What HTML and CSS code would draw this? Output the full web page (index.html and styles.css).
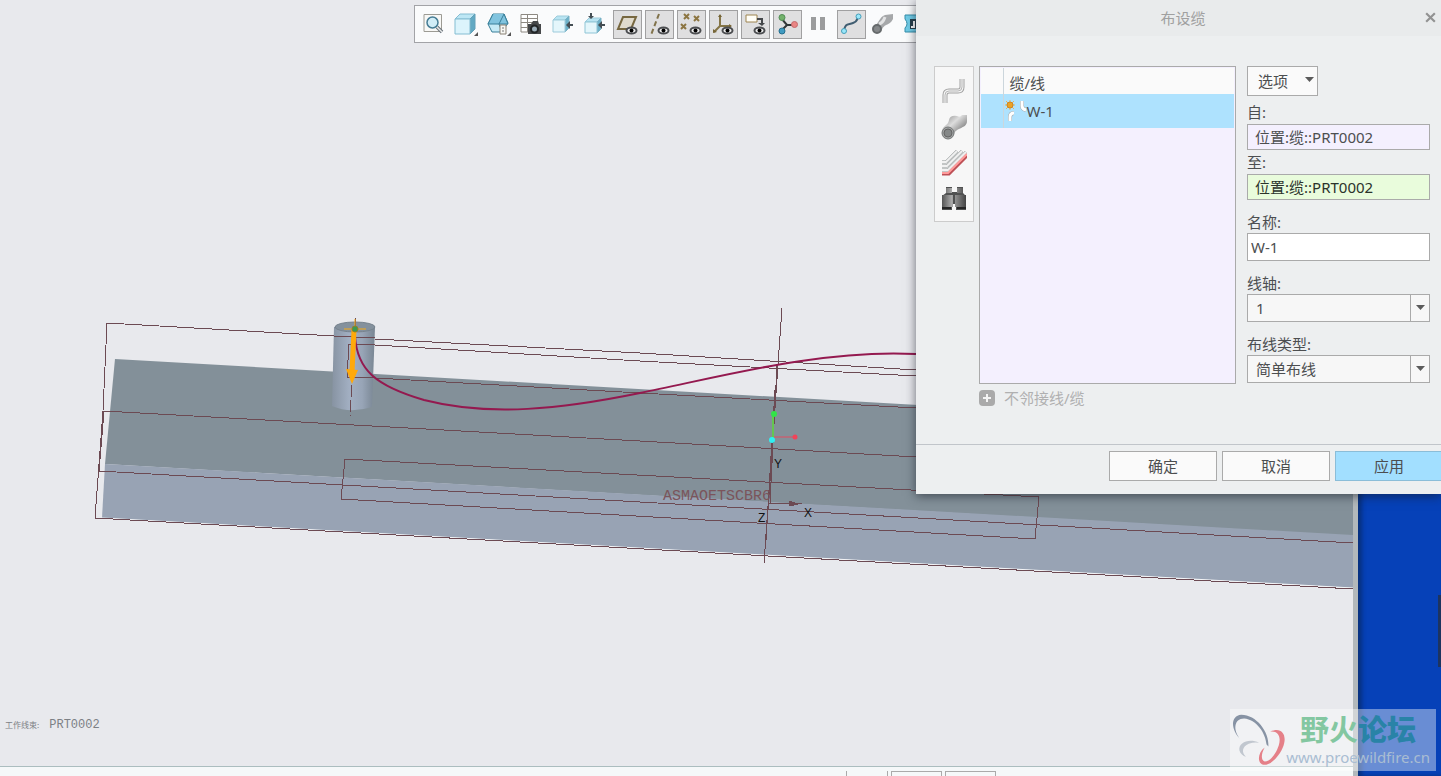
FILE: index.html
```html
<!DOCTYPE html>
<html lang="zh-CN">
	<head>
		<meta charset="UTF-8" />
		<meta name="viewport" content="width=device-width, initial-scale=1.0" />
		<title>布设缆</title>
		<link rel="stylesheet" href="styles.css">
	</head>
	<body>
		<div class="desktop">
			<main class="app">
				<div class="viewport">
					<svg class="scene" viewBox="0 0 1353 766" preserveAspectRatio="xMinYMin slice">
						<defs>
							<linearGradient id="cylinder">
								<stop offset="0" stop-color="#8793a2" />
								<stop offset="0.4" stop-color="#a2afc2" />
								<stop offset="0.7" stop-color="#98a5b7" />
								<stop offset="1" stop-color="#788592" />
							</linearGradient>
						</defs>
						<!-- plate -->
						<path d="M115 359L1353 430V536L105 464Z" fill="#839099" />
						<path d="M105 464L1353 535V588L102 518Z" fill="#98a3b4" />
						<path d="M102 518L1353 588" stroke="#f4f4f6" />
						<!-- cylinder -->
						<path d="M334 327L332 406Q350 414 372 407L375 327Z" fill="url(#cylinder)" />
						<ellipse cx="355" cy="327" rx="20" ry="5" fill="#84919d" stroke="#77838e" />
						<!-- datum planes -->
						<g class="datum">
							<path d="M107 323L334 336M375 339L640 353L916 370M107 323L103 411L95 518L1353 589" />
							<path d="M334 336L375 338M349 344L375 345L640 361L916 376M349 344L347 377L375 378L640 393L916 408" />
							<path d="M104 411L99 471M104 411L640 441L916 457M99 471L640 502L1353 543" />
							<path d="M345 459L1039 497L1035 539L341 499Z" />
							<path d="M782 308L764 563M779 350L768 510M777 365L770 503M775 390L766 540M768 503L802 504" />
							<path d="M356 318L355 330M352 385L350 416" stroke-dasharray="12 3" />
							<path d="M789 501L798 504L789 506Z" fill="#6c4a53" />
						</g>
						<!-- cable -->
						<path d="M355 336C357 370 376 386 424 400C490 417 562 409 640 393C720 377 821 349 916 354" fill="none" stroke="#94194f" stroke-width="2" />
						<!-- start direction arrow -->
						<path d="M355 319V338M344 329H366" stroke="#f7aa16" />
						<path d="M354 330L352 372" stroke="#ffa90a" stroke-width="5" />
						<path d="M346 369L358 370L352 384Z" fill="#ffa90a" />
						<circle cx="355" cy="329" r="3" fill="#3b9a50" stroke="#8f812a" />
						<!-- coordinate system -->
						<path d="M773 414V440" stroke="#65c650" stroke-width="2" />
						<path d="M774 437H795" stroke="#e34c61" />
						<circle cx="774" cy="414" r="3" fill="#32e448" />
						<circle cx="795" cy="437" r="2.5" fill="#f04459" />
						<circle cx="772" cy="440" r="3" fill="#2ff0f2" />
						<text class="axis" x="774" y="468">Y</text>
						<text class="axis" x="804" y="517">X</text>
						<text class="axis" x="758" y="522">Z</text>
						<text class="csys" x="663" y="500">ASMAOETSCBR6</text>
					</svg>
					<p class="work-part"><small>工作线束:</small> PRT0002</p>
				</div>
				<div class="statusbar"><i></i><i class="status-box"></i><i class="status-box"></i></div>
			</main>
			<aside class="wallpaper"><div class="wallpaper-item"></div></aside>

			<div class="toolbar">
				<button type="button" aria-label="重新调整">
					<svg viewBox="0 0 27 27"><path d="M2 3.500H19.500V20.500H2Z" fill="#f8f8f6" stroke="#9c9b94" /><circle cx="10.500" cy="11.500" r="5.500" fill="#d1edf7" stroke="#457c94" stroke-width="1.500" /><path d="M15 16L20 21" stroke="#69727a" stroke-width="3.500" /><path d="M15 16L20 21" stroke="#e5e7e7" stroke-width="1.500" /></svg>
				</button>
				<button type="button" aria-label="显示样式">
					<svg viewBox="0 0 27 27"><path d="M1 8L6 3H21L16 8Z" fill="#bde7f5" stroke="#86bdd2" /><path d="M16 8L21 3V18L16 23Z" fill="#62a9c3" stroke="#62a0b8" /><path d="M1 8H16V23H1Z" fill="#dcf4fc" stroke="#84bdd2" /><path d="M24 21V25H20Z" fill="#555" /></svg>
				</button>
				<button type="button" aria-label="已保存方向">
					<svg viewBox="0 0 27 27"><path d="M7 3H18L22 12L16 21H6L2 13Z" fill="#c5eaf6" stroke="#397f99" /><path d="M7 3L2 13H13L18 3M13 13L16 21M13 13H22L18 3" fill="#81c4df" stroke="#397f99" /><path d="M14 14H20V23H14Z" fill="#f8f8f4" stroke="#898174" /><path d="M16 17H18M16 20H18" stroke="#777" /><path d="M25 21V25H21Z" fill="#555" /></svg>
				</button>
				<button type="button" aria-label="视图管理器">
					<svg viewBox="0 0 27 27"><path d="M3 3.500H19.500V21H3ZM3 7.500H19.500M3 11.500H19.500M3 16.500H19M9.500 3V21" fill="#fff" stroke="#8d8982" /><path d="M10 13H13L15 10H20L21 13H23V23H10Z" fill="#46484a" /><circle cx="16.500" cy="18" r="3.500" fill="#9badb9" stroke="#222527" stroke-width="2" /></svg>
				</button>
				<button type="button" aria-label="前视图">
					<svg viewBox="0 0 27 27"><path d="M3 9L7 5H19L15 9Z" fill="#b8e4f2" stroke="#9dcbdb" /><path d="M15 9L19 5V17L15 21Z" fill="#6db1c9" stroke="#7bb2c5" /><path d="M3 9H15V21H3Z" fill="#e4f6fb" stroke="#9dcbdb" /><path d="M16 14L20 10V13H23V15H20V18Z" fill="#444e54" /></svg>
				</button>
				<button type="button" aria-label="剖切">
					<svg viewBox="0 0 27 27"><path d="M3 11L7 7H19L15 11Z" fill="#b8e4f2" stroke="#9dcbdb" /><path d="M15 11L19 7V18L15 22Z" fill="#6db1c9" stroke="#7bb2c5" /><path d="M3 11H15V22H3Z" fill="#e4f6fb" stroke="#8fc5d6" /><path d="M9 8L6 5H8V2H10V5H12ZM16 14L20 10V13H23V15H20V18Z" fill="#444e54" /></svg>
				</button>
				<button type="button" class="pressed" aria-label="平面显示">
					<svg viewBox="0 0 27 27"><path d="M9 6H22L17 18H4Z" fill="#e0dbcd" stroke="#776841" stroke-width="2" /><ellipse class="eye" cx="17.500" cy="19.500" rx="5" ry="3" /><circle cx="17.500" cy="19.500" r="2" /></svg>
				</button>
				<button type="button" class="pressed" aria-label="轴显示">
					<svg viewBox="0 0 27 27"><path d="M13 3L5 24" fill="none" stroke="#81734b" stroke-width="2" stroke-dasharray="5 3" /><ellipse class="eye" cx="17.500" cy="19.500" rx="5" ry="3" /><circle cx="17.500" cy="19.500" r="2" /></svg>
				</button>
				<button type="button" class="pressed" aria-label="点显示">
					<svg viewBox="0 0 27 27"><path d="M6 3L11 8M11 3L6 8M16 5L21 10M21 5L16 10M3 13L8 18M8 13L3 18" stroke="#8c7541" stroke-width="2" /><ellipse class="eye" cx="17.500" cy="19.500" rx="5" ry="3" /><circle cx="17.500" cy="19.500" r="2" /></svg>
				</button>
				<button type="button" class="pressed" aria-label="坐标系显示">
					<svg viewBox="0 0 27 27"><path d="M10 4V15H21M10 15L4 21" fill="none" stroke="#857546" stroke-width="2" /><path d="M8 6L10 3L12 6ZM19 13L22 15L19 17ZM3 18L3 22L7 21Z" fill="#766638" /><ellipse class="eye" cx="17.500" cy="19.500" rx="5" ry="3" /><circle cx="17.500" cy="19.500" r="2" /></svg>
				</button>
				<button type="button" class="pressed" aria-label="注释显示">
					<svg viewBox="0 0 27 27"><path d="M4 4H15V11H4Z" fill="#fffef7" stroke="#9d8451" /><path d="M15 8H20V13" fill="none" stroke="#45484b" stroke-width="2" /><path d="M16 12H23L20 15Z" fill="#45484b" /><ellipse class="eye" cx="17.500" cy="19.500" rx="5" ry="3" /><circle cx="17.500" cy="19.500" r="2" /></svg>
				</button>
				<button type="button" class="pressed" aria-label="旋转中心">
					<svg viewBox="0 0 27 27"><path d="M7 7L13 14H21M13 14L7 20" fill="none" stroke="#313638" stroke-width="2" /><circle cx="8" cy="6.500" r="3" fill="#73b26c" stroke="#528d55" /><circle cx="20.500" cy="13.500" r="3" fill="#e98584" stroke="#c46a6c" /><circle cx="8" cy="20" r="3" fill="#409bc1" stroke="#246d8e" /></svg>
				</button>
				<button type="button" aria-label="暂停">
					<svg viewBox="0 0 27 27"><path d="M5 6H10V19H5ZM14 6H19V19H14Z" fill="#9b9c9d" /></svg>
				</button>
				<button type="button" class="pressed" aria-label="中心线">
					<svg viewBox="0 0 27 27"><path d="M6 20C7 12 10 14 15 12C21 10 18 7 21 5" fill="none" stroke="#405d71" stroke-width="2" /><circle cx="6" cy="20" r="2.500" fill="#9ae7fa" stroke="#459eb9" /><circle cx="20.500" cy="5.500" r="2.500" fill="#9ae7fa" stroke="#459eb9" /></svg>
				</button>
				<button type="button" aria-label="粗缆">
					<svg viewBox="0 0 27 27"><path d="M3 16C9 13 9 6 15 4L23 3V8C19 16 14 11 11 21Z" fill="#a6a8aa" /><path d="M9 13Q13 12 15 6" fill="none" stroke="#e2e3e4" stroke-width="3" /><circle cx="7" cy="18" r="4" fill="#85888a" stroke="#666a6c" stroke-width="2" /></svg>
				</button>
				<button type="button" aria-label="接头">
					<svg viewBox="0 0 27 27"><path d="M3 4H24V8Q20 13 24 17V21H3V17Q7 13 3 8Z" fill="#71cde8" stroke="#348da9" /><path d="M8 8H17V18H8Z" fill="#273f4b" /><path d="M12 10V16H9" fill="none" stroke="#fff" stroke-width="2" /></svg>
				</button>
			</div>

			<section class="dialog" aria-labelledby="dialogTitle">
				<header class="dialog-title">
					<h1 id="dialogTitle">布设缆</h1>
					<button type="button" class="close" aria-label="关闭">
						<svg viewBox="0 0 12 12"><path d="M2 2L10 10M10 2L2 10" stroke="#929292" stroke-width="2" /></svg>
					</button>
				</header>
				<form id="routeForm" class="dialog-body">
					<nav class="side-tools">
						<button type="button" aria-label="新建缆">
							<svg viewBox="0 0 26 26"><path d="M4 25V17Q4 13 8 13H17Q21 13 21 9V1" fill="none" stroke="#a2a2a2" stroke-width="5" /><path d="M4 25V17Q4 13 8 13H17Q21 13 21 9V1" fill="none" stroke="#f4f4f4" stroke-width="3" /><path d="M4 25V17Q4 13 8 13H17Q21 13 21 9V1" fill="none" stroke="#b8b8b8" /></svg>
						</button>
						<button type="button" aria-label="新建粗缆">
							<svg viewBox="0 0 26 26"><defs><linearGradient id="pipe" x2="1" y2="1"><stop offset="0.1" stop-color="#999" /><stop offset="0.4" stop-color="#ddd" /><stop offset="0.8" stop-color="#777" /></linearGradient></defs><path d="M1 17C2 11 7 12 8 6Q9 1 16 2Q19 4 21 1H26V7C26 15 15 13 13 20L10 24Z" fill="url(#pipe)" /><circle cx="7" cy="19" r="6" fill="#a0a2a2" stroke="#747777" /><circle cx="7" cy="19" r="4" fill="#858888" stroke="#666" /></svg>
						</button>
						<button type="button" aria-label="带状缆">
							<svg viewBox="0 0 26 26"><path d="M1 12H5L16 1M1 16H6L21 1M1 20H7L25 2" fill="none" stroke="#8d9393" stroke-width="3" /><path d="M1 12H5L16 1M1 16H6L21 1M1 20H7L25 2" fill="none" stroke="#f2f2f2" stroke-width="2" /><path d="M1 24H8L26 6" fill="none" stroke="#bd5056" stroke-width="3" /><path d="M1 23H7L26 4" fill="none" stroke="#ff9b9b" stroke-width="2" /></svg>
						</button>
						<button type="button" aria-label="查找">
							<svg viewBox="0 0 26 26"><defs><linearGradient id="metal"><stop offset="0" stop-color="#555" /><stop offset="0.4" stop-color="#aaa" /><stop offset="1" stop-color="#444" /></linearGradient></defs><path d="M5 1H11V6H16V1H22V7L25 10V24H15V18H11V24H1V10L5 7Z" fill="#505151" /><path d="M5 2H11V7H5ZM16 2H22V7H16ZM1 9H12V21H1ZM14 9H25V21H14Z" fill="url(#metal)" /><path d="M1 22H10M16 22H25" stroke="#252525" stroke-width="2" /></svg>
						</button>
					</nav>
					<div class="cables">
						<div class="cable-list">
							<table>
								<thead><tr><th class="marker"></th><th>缆/线</th></tr></thead>
								<tbody>
									<tr>
										<td class="marker"></td>
										<td>
											<div class="cable-name">
												<svg viewBox="0 0 22 24"><path d="M5 22V18Q5 14 9 14M17 2V7Q17 10 21 11" fill="none" stroke="#9da5a9" stroke-width="4" /><path d="M5 22V18Q5 14 9 14M17 2V7Q17 10 21 11" fill="none" stroke="#fff" stroke-width="3" /><path d="M5 1V11M0 6H10M1 2L9 10M9 2L1 10" stroke="#eab658" /><circle cx="5" cy="6" r="3" fill="#eda323" stroke="#ca8428" /></svg>
												<span>W-1</span>
											</div>
										</td>
									</tr>
								</tbody>
							</table>
						</div>
						<button type="button" class="expander" disabled><span class="plus" aria-hidden="true"><svg viewBox="0 0 16 16"><path d="M8 4V12M4 8H12" stroke="#f4f4f4" stroke-width="2" /></svg></span>不邻接线/缆</button>
					</div>
					<div class="fields">
						<button type="button" class="options">选项 <svg viewBox="0 0 9 6"><path d="M0 0H9L4.500 5Z" /></svg></button>
						<label for="from">自:</label>
						<input type="text" id="from" class="reference" value="位置:缆::PRT0002" />
						<label for="to">至:</label>
						<input type="text" id="to" class="reference active" value="位置:缆::PRT0002" />
						<label for="name" class="group">名称:</label>
						<input type="text" id="name" value="W-1" />
						<label for="spool" class="group">线轴:</label>
						<div class="select">
							<select id="spool"><option>1</option></select>
							<span><svg viewBox="0 0 9 6"><path d="M0 0H9L4.500 5Z" /></svg></span>
						</div>
						<label for="type" class="group">布线类型:</label>
						<div class="select">
							<select id="type"><option>简单布线</option></select>
							<span><svg viewBox="0 0 9 6"><path d="M0 0H9L4.500 5Z" /></svg></span>
						</div>
					</div>
				</form>
				<footer class="dialog-footer">
					<button type="submit" form="routeForm">确定</button>
					<button type="button">取消</button>
					<button type="button" class="apply">应用</button>
				</footer>
			</section>

			<div class="watermark">
				<svg viewBox="0 0 60 60"><path d="M41 38C42 22 28 4 12 4C0 5 1 20 11 30C3 21 4 8 15 8C28 9 38 23 39 36Z" fill="#8793a4" /><path d="M31 34C20 29 9 34 10 42C11 46 14 48 17 49C12 44 13 38 20 35Q26 33 31 34Z" fill="#c1c7cf" /><path d="M43 22C56 16 62 27 56 40C51 51 41 60 34 57C29 54 30 44 37 39C33 46 33 53 37 54C43 54 49 46 52 37C55 27 51 21 43 22Z" fill="#e58088" /></svg>
				<div>
					<strong>野火<b>论坛</b></strong>
					<a href="#">www.proewildfire.cn</a>
				</div>
			</div>
		</div>
	</body>
</html>
```
FILE: styles.css
```css
* {
	box-sizing: border-box;
}
body {
	margin: 0;
	font-family: "Noto Sans", "Noto Sans CJK SC", sans-serif;
	font-size: 15px;
	color: #4c4e50;
}
button,
input,
select {
	font: inherit;
	color: inherit;
	border-radius: 0;
}
svg {
	display: block;
}
.desktop {
	position: relative;
	display: flex;
	height: 100vh;
	overflow: hidden;
}
.app {
	display: flex;
	flex: 1;
	flex-direction: column;
	min-width: 0;
	border-right: 5px solid #b2b8bb;
}
.viewport {
	position: relative;
	flex: 1;
	min-height: 0;
	background: #e8e9ed;
	overflow: hidden;
}
.scene {
	width: 100%;
	height: 100%;
}
.datum {
	fill: none;
	stroke: #6c4a53;
	stroke-width: 1;
	shape-rendering: crispEdges;
}
.axis {
	font: 12px "Liberation Sans", sans-serif;
	fill: #111;
}
.csys {
	font: 15px "Liberation Mono", monospace;
	fill: #7b545b;
}
.work-part {
	position: absolute;
	left: 5px;
	bottom: 33px;
	display: flex;
	align-items: center;
	gap: 10px;
	margin: 0;
	font: 12px/16px "Liberation Mono", monospace;
	color: #7c8085;
}
.work-part small {
	font: 8px/16px "Noto Sans CJK SC", sans-serif;
}
.statusbar {
	display: flex;
	align-items: flex-end;
	justify-content: flex-end;
	gap: 3px;
	height: 10px;
	padding-right: 357px;
	background: #f5f8f9;
	border-top: 1px solid #abbdbf;
}
.statusbar i {
	width: 42px;
	height: 5px;
	border: 1px solid #aaa;
	border-width: 0 1px;
}
.statusbar .status-box {
	width: 51px;
	border-width: 1px 1px 0;
}

/* Wallpaper */
.wallpaper {
	display: flex;
	flex: 0 0 83px;
	align-items: center;
	justify-content: flex-end;
	padding-top: 486px;
	background: #0641b8;
	box-shadow: inset 4px 0 4px #07307e;
}
.wallpaper-item {
	width: 3px;
	height: 72px;
	background: #1d345f;
}

/* Toolbar */
.toolbar {
	position: absolute;
	top: 5px;
	left: 414px;
	display: flex;
	gap: 3px;
	padding: 4px 6px 3px;
	background: #fafbfc;
	border: 1px solid #a2a3a7;
}
.toolbar button {
	width: 29px;
	height: 29px;
	padding: 0;
	background: none;
	border: 1px solid transparent;
}
.toolbar .pressed {
	background: #dfdfe0;
	border-color: #a0a0a1;
}
.eye {
	fill: #eee;
	stroke: #4b4d50;
	stroke-width: 2;
}

/* Dialog */
.dialog {
	position: absolute;
	top: 0;
	right: 0;
	width: 525px;
	background: #edeff0;
	box-shadow: 0 2px 10px rgba(20, 25, 35, 0.6);
}
.dialog-title {
	display: flex;
	align-items: center;
	height: 36px;
	padding: 0 4px 2px 26px;
	background: #e9ebec;
}
h1 {
	flex: 1;
	margin: 0;
	font-size: 15px;
	font-weight: normal;
	text-align: center;
	color: #a0a0a0;
}
.close {
	padding: 0;
	background: none;
	border: 0;
}
.close svg {
	width: 13px;
	height: 13px;
}
.dialog-body {
	display: flex;
	align-items: flex-start;
	gap: 5px;
	height: 408px;
	padding: 30px 11px 0 18px;
}
.side-tools {
	display: flex;
	flex-direction: column;
	align-items: center;
	gap: 10px;
	width: 40px;
	height: 156px;
	padding: 11px 0;
	background: #f7f7f7;
	border: 1px solid #ccc;
}
.side-tools button {
	width: 26px;
	height: 26px;
	padding: 0;
	background: none;
	border: 0;
}
.cables {
	flex: 1;
}
.cable-list {
	height: 318px;
	padding: 1px;
	background: #f4f0fe;
	border: 1px solid #aaa;
}
table {
	width: 100%;
	border-collapse: collapse;
}
th {
	height: 26px;
	padding: 4px 6px 0;
	background: #fafafa;
	font-weight: normal;
	line-height: 22px;
	text-align: left;
}
td {
	height: 34px;
	padding: 0 1px;
	background: #aee2fe;
}
.marker {
	width: 22px;
	border-right: 1px solid #ccd6dc;
}
.cable-name {
	display: flex;
	align-items: center;
}
.cable-name svg {
	width: 22px;
	height: 24px;
}
.expander {
	display: flex;
	align-items: center;
	gap: 9px;
	margin-top: 3px;
	padding: 0;
	background: none;
	border: 0;
	color: #b0b0b0;
}
.plus {
	width: 16px;
	height: 16px;
	background: #aaa;
	border-radius: 4px;
}
.fields {
	display: flex;
	flex-direction: column;
	width: 183px;
	margin-left: 6px;
}
.options {
	display: flex;
	align-items: center;
	justify-content: space-between;
	width: 71px;
	height: 30px;
	margin-bottom: 4px;
	padding: 0 3px 2px 10px;
	background: #fafafa;
	border: 1px solid #aaa;
}
.fields svg {
	width: 9px;
	height: 6px;
	fill: #5b5b5b;
}
label {
	height: 24px;
	line-height: 24px;
}
label.group {
	height: 22px;
	margin-top: 11px;
	line-height: 22px;
}
input {
	width: 100%;
	height: 28px;
	padding: 0 3px;
	background: #fff;
	border: 1px solid #aaa;
}
.reference {
	height: 26px;
	padding: 0 7px 2px;
	background: #f4f0fe;
}
.reference.active {
	background: #e9fcdc;
	color: #2b332b;
}
.select {
	display: grid;
	grid-template-columns: 1fr 19px;
	height: 28px;
	background: #f7f7f7;
	border: 1px solid #aaa;
}
select {
	grid-area: 1 / 1 / 2 / 3;
	width: 100%;
	padding: 0 24px 0 8px;
	appearance: none;
	background: none;
	border: 0;
}
.select span {
	display: grid;
	grid-area: 1 / 2;
	place-items: center;
	border-left: 1px solid #aaa;
	pointer-events: none;
}
.dialog-footer {
	display: flex;
	gap: 5px;
	height: 50px;
	padding: 6px 0 0 193px;
	border-top: 1px solid #c1c5ca;
	overflow: hidden;
}
.dialog-footer button {
	flex: 0 0 108px;
	height: 30px;
	padding: 0 0 2px;
	background: #fafafa;
	border: 1px solid #aaa;
}
.dialog-footer .apply {
	background: #a2dfff;
	border-color: #8bbdd8;
}

/* Watermark */
.watermark {
	position: absolute;
	right: 5px;
	bottom: 5px;
	display: flex;
	width: 206px;
	height: 62px;
	background: rgba(255, 255, 255, 0.4);
}
.watermark svg {
	width: 60px;
	height: 60px;
}
.watermark div {
	display: flex;
	flex-direction: column;
	flex: 1;
	align-items: center;
	padding-right: 6px;
}
.watermark strong {
	font-family: "Noto Sans CJK SC", sans-serif;
	font-size: 29px;
	line-height: 38px;
	color: #83c7a1;
}
.watermark b {
	color: #2983a7;
}
.watermark a {
	font-size: 15px;
	line-height: 20px;
	color: #a9bdd2;
	text-decoration: none;
}
```
